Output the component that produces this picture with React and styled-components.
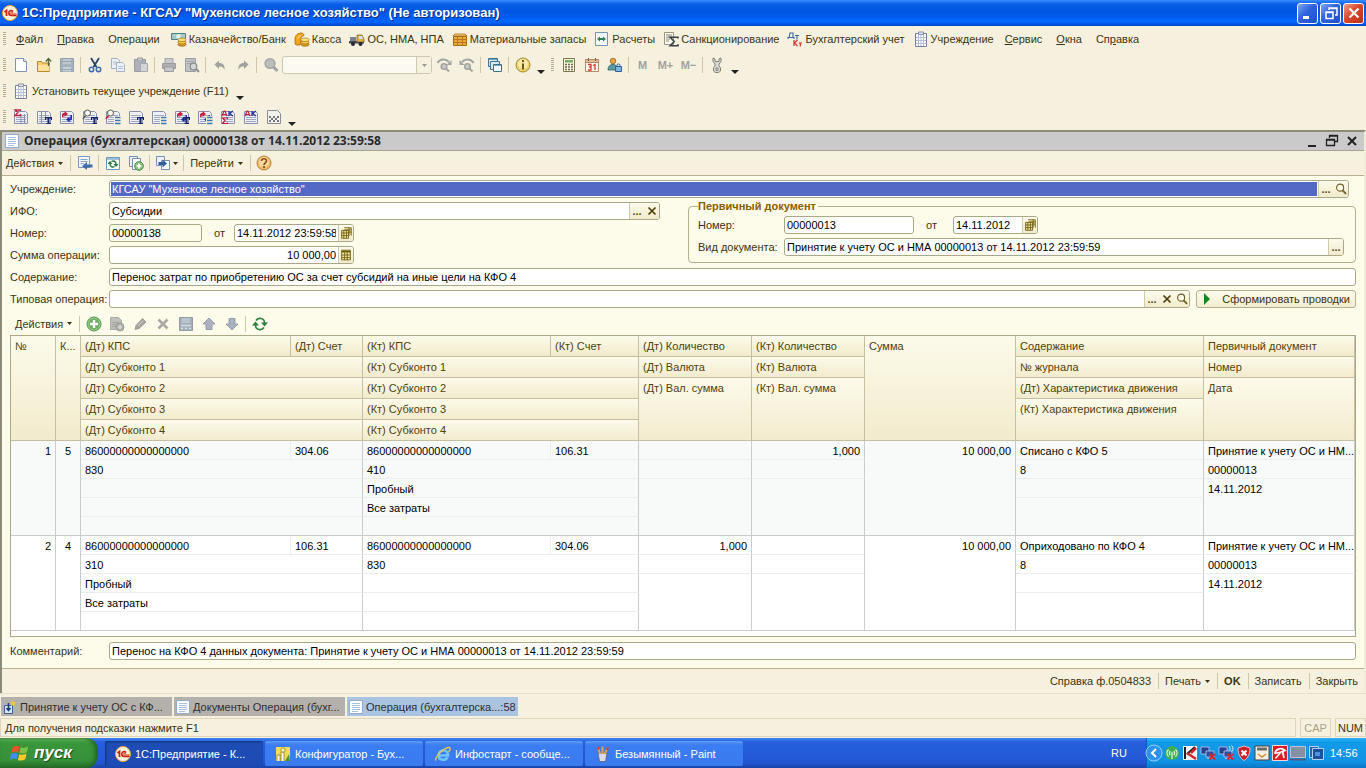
import styled, { createGlobalStyle } from "styled-components";

const page = (
  <>
    <path d="M2.5 1.5h8l3 3v10h-11z" fill="#fff" stroke="#7d93b5" />
    <path d="M10.5 1.5v3h3" fill="#dfe8f5" stroke="#7d93b5" />
  </>
);

const sheet = (
  <>
    <path d="M1.5 2.5h11l2 2v10h-13z" fill="#eef0f8" stroke="#8a8fae" />
    <path d="M3 8.5h10M3 10.5h10M3 12.5h10M3 6.5h10" stroke="#a3a7bf" />
  </>
);

const letterT = (
  <path d="M9 8h7v3h-1V9.500h-1.500V14H15v1h-4.500v-1h1V9.500H10V11H9z" fill="#16246e" />
);

const blueLines = (
  <>
    <path d="M9 7h7v9H9z" fill="#f6f0dd" />
    <path d="M10 8.500h5.500M10 11.500h5.500M10 14.500h5.500" stroke="#3b78b8" strokeWidth="1.500" />
  </>
);

const redBlueArrows = (
  <>
    <path d="M3 8V6c0-1.500 1-2 2.500-2V2L9 5 5.500 8V6C4.500 6 4.500 6.500 4.500 8z" fill="#c2203c" />
    <path d="M13 6v3.500c0 1.500-1 2-2.500 2v2l-3.500-3 3.500-3v2c1 0 1 0 1-3.500z" fill="#1d2cb0" />
  </>
);

const coins = (
  <>
    <ellipse cx="11" cy="13.500" rx="4.200" ry="1.800" fill="#d79a1d" stroke="#946410" strokeWidth=".6" />
    <ellipse cx="11" cy="11.200" rx="4.200" ry="1.800" fill="#f4c742" stroke="#946410" strokeWidth=".6" />
    <ellipse cx="11" cy="8.800" rx="4.200" ry="1.800" fill="#ffe27a" stroke="#946410" strokeWidth=".6" />
  </>
);

const clipboard = (
  <>
    <path d="M2.500 2.500h11v13h-11z" fill="#fff" stroke="#74809a" />
    <path d="M5.500 1h5v2.500h-5z" fill="#dfe3ec" stroke="#74809a" strokeWidth=".8" />
    <path d="M3 6.500h10M3 9.500h10M3 12.500h10M5.500 4v11M8 4v11M10.500 4v11" stroke="#b5bfd3" />
  </>
);

const monitors = (
  <>
    <path d="M1 2h8v7H1z" fill="#24418f" stroke="#b9c9ee" strokeWidth=".8" />
    <path d="M6 6h8v6H6z" fill="#30509f" stroke="#b9c9ee" strokeWidth=".8" />
    <path d="M7 13.500h6" stroke="#aab8dd" />
  </>
);

const redCross = (
  <path d="M9.500 9l5.500 5.500M15 9l-5.500 5.500" stroke="#d8262b" strokeWidth="2" />
);

const icons = {
  logo: (
    <>
      <circle cx="8" cy="8" r="7.500" fill="#fdf3dd" stroke="#e9a63b" />
      <path d="M2.500 7l2-1.500V11" fill="none" stroke="#cf2016" strokeWidth="1.800" />
      <path d="M11 6.500C9.500 4.800 6.800 5.800 6.800 8c0 1.500 1 2.500 2.700 2.500h5" fill="none" stroke="#cf2016" strokeWidth="1.600" />
      <path d="M10.800 7.600c-1-.9-2.200-.4-2.200.6 0 .5.400.8 1 .8h5" fill="none" stroke="#cf2016" />
    </>
  ),
  bank: (
    <>
      <path d="M.5 2.500h14v6H.5z" fill="#a5c9c4" stroke="#4f8082" />
      <path d="M5.500 3.500h4v4h-4z" fill="#e6f3ee" />
      {coins}
    </>
  ),
  cash: (
    <>
      <path d="M1 13V8c0-4 3-6 6-6 2 0 3 1 3 2.500L7 6v3l-1 5H2z" fill="#f2a31e" stroke="#b46a0d" strokeWidth=".8" />
      <path d="M4 8c0-2 1-3 3-3.500" stroke="#ffe9a5" fill="none" />
      {coins}
    </>
  ),
  truck: (
    <>
      <path d="M1 6h6v5H1z" fill="#7e828c" />
      <path d="M0 10h15v2.500H0z" fill="#454852" />
      <path d="M8 4h5l2 4v3H8z" fill="#e0b03e" stroke="#6f5a24" strokeWidth=".7" />
      <path d="M10 5h3l1 3h-4z" fill="#cfe3f2" />
      <circle cx="4" cy="13" r="2" fill="#26272c" />
      <circle cx="11.500" cy="13" r="2" fill="#26272c" />
    </>
  ),
  box: (
    <>
      <path d="M1 5l2-2h10l2 2z" fill="#f7d37a" stroke="#a46b1a" strokeWidth=".8" />
      <path d="M1.500 5.500h13v9h-13z" fill="#eda93a" stroke="#a46b1a" />
      <path d="M2 8.500h12M2 11.500h12M5.500 5v9.500M10.500 5v9.500" stroke="#b9781f" />
    </>
  ),
  settle: (
    <>
      <path d="M1.500 1.500h12v13h-12z" fill="#f3f8fd" stroke="#6f93bd" />
      <path d="M3 8l3-2.500v1.500h3V5.500L12 8l-3 2.500V9H6v1.500z" fill="#2f7d56" />
    </>
  ),
  sigma: (
    <>
      <path d="M1.500 1.500h9v12h-9z" fill="#fbfaf0" stroke="#9a957d" />
      <path d="M3 4h6M3 6h6M3 8h4M3 10h3" stroke="#8f8b77" />
      <path d="M15 7.500V6.200H7.200l4 4.300-4 4.300H15v-1.500" fill="none" stroke="#39434b" strokeWidth="1.600" />
    </>
  ),
  debit: (
    <>
      <path d="M1 8V6.500h1L3 2h3v4.500h1V8M2.500 6.500h3M8 4.500h4M10 4.500v4" fill="none" stroke="#38679b" strokeWidth="1.100" />
      <path d="M7 9v6M10.500 9L7.500 12l3 3M11.500 12H15M13.300 12v3.500" fill="none" stroke="#cb3434" strokeWidth="1.200" />
    </>
  ),
  clipboard,
  newDoc: page,
  open: (
    <>
      <path d="M1.500 4.500h4l1 1.500h7v8.500h-12z" fill="#f5cf6c" stroke="#b98a2c" />
      <path d="M2 8h11.500v6H2z" fill="#fbe29a" />
      <path d="M12.500 9V2M9.800 4.500l2.700-3 2.700 3" fill="none" stroke="#4c6b35" strokeWidth="1.300" />
    </>
  ),
  save: (
    <>
      <path d="M1.500 1.500h13v13h-13z" fill="#a6b3be" stroke="#93a1ae" />
      <path d="M4 2h8v5H4z" fill="#bdc8d1" />
      <path d="M4 10h8v4.500H4z" fill="#c6d0d9" />
      <path d="M3 4.500h10M3 12.500h10" stroke="#97a5b1" />
    </>
  ),
  cut: (
    <>
      <path d="M4 1l5.500 9M12 1L6.500 10" stroke="#2d4463" strokeWidth="1.800" />
      <circle cx="4.500" cy="12.500" r="2.200" fill="none" stroke="#3e6aa8" strokeWidth="1.500" />
      <circle cx="11.500" cy="12.500" r="2.200" fill="none" stroke="#3e6aa8" strokeWidth="1.500" />
    </>
  ),
  copy: (
    <>
      <path d="M1.500 1.500h6l2 2v8h-8z" fill="#eef1f5" stroke="#a2b2c8" />
      <path d="M6.500 5.500h6l2 2v7h-8z" fill="#eef1f5" stroke="#a2b2c8" />
      <path d="M3 5h4M3 7h3M8 9.500h5M8 11.500h5" stroke="#b4c1d3" />
    </>
  ),
  paste: (
    <>
      <path d="M1.500 2.500h11v12h-11z" fill="#aeb2b8" stroke="#989ca2" />
      <path d="M4.500 1h5v3h-5z" fill="#c6c8cb" stroke="#989ca2" />
      <path d="M7.500 6.500h7v8h-7z" fill="#d3d5d7" stroke="#a6a9ae" />
    </>
  ),
  print: (
    <>
      <path d="M4 1.500h8v5H4z" fill="#c8c9cb" stroke="#a2a4a7" />
      <path d="M1.500 6.500h13v5h-13z" fill="#adafb1" stroke="#999b9e" />
      <path d="M3.500 10h9v4.500h-9z" fill="#c5c7c9" stroke="#999b9e" />
    </>
  ),
  preview: (
    <>
      <path d="M1.500 1.500h10v13h-10z" fill="#bfc1c3" stroke="#9da0a3" />
      <path d="M3 4.500h7M3 6.500h4" stroke="#a5a8ab" />
      <circle cx="9.500" cy="9.500" r="3.300" fill="#d5d6d6" stroke="#8b8e92" strokeWidth="1.300" />
      <path d="M12 12l3 3" stroke="#8b8e92" strokeWidth="2" />
    </>
  ),
  undo: <path d="M2.500 7.500l4.500-4v2.500c4 0 6 2 5.500 7-1-3-2.500-3.500-5.500-3.500v2.500z" fill="#a0a29f" />,
  redo: <path d="M13.500 7.500L9 3.500v2.500c-4 0-6 2-5.500 7 1-3 2.500-3.500 5.500-3.500v2.500z" fill="#a0a29f" />,
  find: (
    <>
      <circle cx="7" cy="6.500" r="4.800" fill="#bcbebd" stroke="#a5a7a5" strokeWidth="1.600" />
      <path d="M10.500 10l4 4" stroke="#a0a2a1" strokeWidth="3" />
    </>
  ),
  findNext: (
    <>
      <circle cx="8" cy="9.500" r="2.800" fill="#c9cac6" stroke="#a3a5a3" strokeWidth="1.600" />
      <path d="M10 11.500l3 3" stroke="#a3a5a3" strokeWidth="2" />
      <path d="M1.500 6C4 1.500 10 1.500 13 5" fill="none" stroke="#a3a5a3" strokeWidth="2" />
      <path d="M15.500 3v5h-5z" fill="#a3a5a3" />
    </>
  ),
  findPrev: (
    <>
      <circle cx="8.500" cy="9.500" r="2.800" fill="#c9cac6" stroke="#a3a5a3" strokeWidth="1.600" />
      <path d="M10.500 11.500l3 3" stroke="#a3a5a3" strokeWidth="2" />
      <path d="M14.500 6C12 1.500 6 1.500 3 5" fill="none" stroke="#a3a5a3" strokeWidth="2" />
      <path d="M.5 3v5h5z" fill="#a3a5a3" />
    </>
  ),
  windows: (
    <>
      <path d="M1.500 1.500h9v8h-9z" fill="#d9eaf2" stroke="#41708c" />
      <path d="M3.500 4.500h9v8h-9z" fill="#d9eaf2" stroke="#41708c" />
      <path d="M6.500 7.500h8v7h-8z" fill="#f8fcff" stroke="#41708c" />
      <path d="M2 2.500h8M7 8.500h7" stroke="#6fa3c0" />
    </>
  ),
  info: (
    <>
      <circle cx="8" cy="8" r="7" fill="#ecd36e" stroke="#a58a34" />
      <circle cx="8" cy="7" r="5" fill="#f8e9a6" />
      <path d="M8 3v2M8 6.500v6" stroke="#6b5718" strokeWidth="2" />
    </>
  ),
  calc: (
    <>
      <path d="M2.500 1.500h11v13h-11z" fill="#faf7e2" stroke="#7d7748" />
      <path d="M4 3h8v2.500H4z" fill="#79a95c" />
      <path d="M4 7.500h8M4 10h8M4 12.500h8" stroke="#6d6a4d" strokeWidth="1.500" strokeDasharray="2 1" />
    </>
  ),
  calendar: (
    <>
      <path d="M1.500 2.500h13v12h-13z" fill="#fdf7ef" stroke="#b48a6a" />
      <path d="M1.500 2.500h13v3h-13z" fill="#e5b898" stroke="#b48a6a" />
      <path d="M4.500 1v3M11.500 1v3" stroke="#865f45" />
      <path d="M4 7.500h3v5.500H4M5 10h2M9 8.500l2-1V13" fill="none" stroke="#d13c2c" strokeWidth="1.300" />
    </>
  ),
  users: (
    <>
      <circle cx="6" cy="4" r="2.800" fill="#e7a43f" stroke="#8f6523" strokeWidth=".8" />
      <path d="M1 13c0-4 2-5.500 5-5.500S10 9 10 13z" fill="#5d9a9e" stroke="#2f6266" strokeWidth=".8" />
      <path d="M8.500 9.500h6v5h-6z" fill="#7fb4de" stroke="#2f5f8f" />
      <path d="M10 9.500V8c0-1.500 3-1.500 3 0v1.500" fill="none" stroke="#2f5f8f" />
    </>
  ),
  wrench: (
    <path
      d="M4 1v3.500l2 2.500v2L4.500 11v3l2 1.500h3l2-1.500v-3L10 9V7l2-2.500V1L10 2v2.500H6V2zM7 11h2v2.500H7z"
      fill="#dadad4"
      stroke="#77776f"
      strokeWidth=".9"
    />
  ),
  repSum: (
    <>
      {sheet}
      <path d="M8 5v9M11.500 5v9" stroke="#8a8fae" />
      <path d="M7.500 2V1H2l3 2.500L2 6.500h5.500V5" fill="none" stroke="#c22646" strokeWidth="1.300" />
    </>
  ),
  repT: (
    <>
      {sheet}
      <path d="M5.500 3v11M9.500 3v5" stroke="#8a8fae" />
      {letterT}
    </>
  ),
  repArrows: (
    <>
      {sheet}
      {redBlueArrows}
    </>
  ),
  repFindT: (
    <>
      {sheet}
      <circle cx="5.500" cy="4" r="3" fill="#fafaf2" stroke="#5c5c50" />
      <path d="M3.500 6.500L1 10" stroke="#5c5c50" strokeWidth="1.500" />
      {letterT}
    </>
  ),
  repFindLines: (
    <>
      {sheet}
      <circle cx="5.500" cy="4" r="3" fill="#fafaf2" stroke="#5c5c50" />
      <path d="M3.500 6.500L1 10" stroke="#c2203c" strokeWidth="1.500" />
      {blueLines}
    </>
  ),
  repSheetT: (
    <>
      {sheet}
      {letterT}
    </>
  ),
  repSheetLines: (
    <>
      {sheet}
      {blueLines}
    </>
  ),
  repArrowsT: (
    <>
      {sheet}
      {redBlueArrows}
      {letterT}
    </>
  ),
  repArrowsLines: (
    <>
      {sheet}
      {redBlueArrows}
      {blueLines}
    </>
  ),
  repAkSum: (
    <>
      {sheet}
      <path d="M2 7l2-5h1l2 5M3 5.500h3" fill="none" stroke="#c2203c" strokeWidth="1.200" />
      <path d="M9 2v5M13 2L9.500 4.500 13 7" fill="none" stroke="#2330a0" strokeWidth="1.300" />
      <path d="M7.500 10V9H2.500l2.500 2.500L2.500 14.500h5v-1" fill="none" stroke="#c2203c" strokeWidth="1.200" />
    </>
  ),
  repAk: (
    <>
      {sheet}
      <path d="M2 7l2-5h1l2 5M3 5.500h3" fill="none" stroke="#c2203c" strokeWidth="1.200" />
      <path d="M9 2v5M13 2L9.500 4.500 13 7" fill="none" stroke="#2330a0" strokeWidth="1.300" />
    </>
  ),
  repCheck: (
    <>
      <path d="M1.500 1.500h10l3 3v10h-13z" fill="#f2f2ec" stroke="#8b8d92" />
      <path d="M3 8h10M3 12h10" stroke="#77797e" strokeWidth="2" strokeDasharray="2 2" />
      <path d="M5 10h8" stroke="#77797e" strokeWidth="2" strokeDasharray="2 2" />
    </>
  ),
  doc: (
    <>
      <path d="M1.500 1.500h13v13h-13z" fill="#fff" stroke="#93a9cc" />
      <path d="M4 4.500h8M4 6.500h8M4 8.500h8M4 10.500h8M4 12.500h6" stroke="#a9bfe0" />
    </>
  ),
  docNew: (
    <>
      <path d="M2.500 6.500h8v8h-8z" fill="#dce6f5" stroke="#3a5b93" />
      <path d="M6.500 4v6.500M4.500 9l2 2.500 2-2.500" stroke="#1f3c74" strokeWidth="1.500" fill="none" />
      <path d="M11 1l1 2.200 2.500.3-2 1.600.5 2.400-2-1.500-2 1.500.5-2.400-2-1.600L10 3.200z" fill="#f7c33c" />
    </>
  ),
  toList: (
    <>
      <path d="M1.500 1.500h11v11h-11z" fill="#f4f7fb" stroke="#7c97bf" />
      <path d="M3.500 4.500h7M3.500 6.500h7M3.500 8.500h3" stroke="#8ba3c7" />
      <path d="M5 11l5-4v2.500h5.500v3H10V15z" fill="#3d6ea9" />
    </>
  ),
  refreshBox: (
    <>
      <path d="M1.500 2.500h13v12h-13z" fill="#f4faf6" stroke="#6d99b6" />
      <path d="M2 3h12v2H2z" fill="#9fc1d8" />
      <path d="M2.500 9h5L5 6zM8.500 9h5L11 12z" fill="#2a7542" />
      <path d="M5 9c0 3 3 3.500 4.500 2.500M11 9c0-3-3-3.500-4.500-2.500" fill="none" stroke="#2a7542" strokeWidth="1.400" />
    </>
  ),
  addCopy: (
    <>
      <path d="M1.500 1.500h8v10h-8z" fill="#eef3fa" stroke="#7790b3" />
      <path d="M4.500 3.500h8v11h-8z" fill="#fafcff" stroke="#7790b3" />
      <circle cx="11" cy="11" r="4.300" fill="#8cc37e" stroke="#4e8d49" />
      <path d="M11 8.500v5M8.500 11h5" stroke="#fff" strokeWidth="1.700" />
    </>
  ),
  basedOn: (
    <>
      <path d="M1.500 1.500h8v9h-8z" fill="#eef3fa" stroke="#7790b3" />
      <path d="M6.500 5.500h8v9h-8z" fill="#fafcff" stroke="#7790b3" />
      <path d="M3.500 7h4V4.500l4.500 4L7.500 12.500V10h-4z" fill="#2f5f96" />
    </>
  ),
  help: (
    <>
      <circle cx="8" cy="8" r="7" fill="#f1bb6d" stroke="#b7803b" />
      <circle cx="8" cy="7" r="5" fill="#fadba4" />
      <path d="M5.500 6c0-3 5-3 5 0 0 2-2.500 1.800-2.500 4M8 11v2" fill="none" stroke="#8a4f16" strokeWidth="1.700" />
    </>
  ),
  add: (
    <>
      <circle cx="8" cy="8" r="7" fill="#8fc684" stroke="#5c9257" />
      <circle cx="8" cy="8" r="5.200" fill="#6cad63" />
      <path d="M8 4v8M4 8h8" stroke="#fff" strokeWidth="2.400" />
    </>
  ),
  addCopyOff: (
    <>
      <path d="M1.500 1.500h8l3 3v9h-11z" fill="#bfc0bb" stroke="#a9aaa6" />
      <path d="M3 6.500h7M3 8.500h5M3 10.500h4" stroke="#a4a5a1" />
      <circle cx="11" cy="11" r="4" fill="#b0b1ad" stroke="#9b9c98" />
      <path d="M11 9v4M9 11h4" stroke="#d8d8d3" strokeWidth="1.500" />
    </>
  ),
  edit: (
    <>
      <path d="M3 13.500l1-4 6.500-7 3.500 3.500-7 6.500z" fill="#a4a5a0" stroke="#8f908c" strokeWidth=".8" />
      <path d="M6 10l5-5.500" stroke="#d0d0ca" />
    </>
  ),
  remove: <path d="M3.500 3.500l9 9M12.500 3.500l-9 9" stroke="#aaaaa5" strokeWidth="2.800" />,
  finish: (
    <>
      <path d="M1.500 1.500h13v13h-13z" fill="#a5afb9" stroke="#929da8" />
      <path d="M4 2h8v5H4z" fill="#bcc5cd" />
      <path d="M3 9.500h10M3 12.500h2M7 12.500h2M11 12.500h2" stroke="#d7dce0" strokeWidth="1.500" />
    </>
  ),
  up: <path d="M8 2l6 6h-3v5.500H5V8H2z" fill="#aab2c1" stroke="#959dad" />,
  down: <path d="M8 14L2 8h3V2.500h6V8h3z" fill="#aab2c1" stroke="#959dad" />,
  refresh: (
    <>
      <path d="M3.500 9c0 5 6 6 8.500 2.500M12.500 7c0-5-6-6-8.500-2.500" fill="none" stroke="#2f8142" strokeWidth="1.600" />
      <path d="M0 9.500h7L3.500 5.500zM16 6.500H9l3.500 4z" fill="#2f8142" />
    </>
  ),
  dates: (
    <>
      <path d="M3 5h8v9H3zM6 2h8v9" fill="#f5e79c" stroke="#6d5d12" />
      <path d="M3 8h8M3 11h8M5.500 5v9M8.500 5v9M6 4.500h8M11 7h3M11.500 2v9" stroke="#6d5d12" />
    </>
  ),
  sum: (
    <>
      <path d="M3 2.500h10v11H3z" fill="#f5e79c" stroke="#6d5d12" />
      <path d="M3 4h10" stroke="#6d5d12" strokeWidth="2" />
      <path d="M3 8h10M3 11h10M6.500 5v9M9.500 5v9" stroke="#6d5d12" />
    </>
  ),
  clear: <path d="M4 4l8 8M12 4l-8 8" stroke="#4d3f0c" strokeWidth="2" />,
  lens: (
    <>
      <circle cx="7" cy="6.500" r="4" fill="#fdfbe9" stroke="#6d5d2a" strokeWidth="1.300" />
      <path d="M9.800 9.500l4 4" stroke="#6d5d2a" strokeWidth="2" />
    </>
  ),
  play: <path d="M5 2l6 6-6 6z" fill="#0c8a1c" />,
  config: (
    <>
      <path d="M1 1h14v14H1z" fill="#f3dc55" />
      <path d="M2 15V9h3v6M6 15V6h3v9" fill="#fff" stroke="#8e7c1c" strokeWidth=".8" />
      <circle cx="8" cy="4" r="2.200" fill="#fff8c6" stroke="#8e7c1c" strokeWidth=".8" />
      <path d="M10 15l4-7 1 7z" fill="#5a8f3a" />
    </>
  ),
  explorer: (
    <>
      <path d="M3.500 9.500h9.500c0-7-9.500-7-9.500 0 0 5 7 5.500 9 1.800" fill="none" stroke="#6fc6f7" strokeWidth="2.600" />
      <path d="M1 14.500C-1 12 9 1 14.500 1.500c1.500 1 .5 3-1 4.500" fill="none" stroke="#f0c74a" strokeWidth="1.300" />
    </>
  ),
  paint: (
    <>
      <path d="M3 7h9l-1.500 8.500h-6z" fill="#d9dbe8" stroke="#585c7c" strokeWidth=".8" />
      <path d="M5 8L3 1M7.500 8V.5M9.500 8L13 1.500" stroke="#e0a34c" strokeWidth="2" />
      <path d="M3 1l.8 2.500M13 1.500L12 4" stroke="#cf3627" strokeWidth="2" />
    </>
  ),
  flag: (
    <>
      <path d="M2 3.500C4 2 6 2.200 7.600 3L6.600 7.500C5 6.700 3 6.700 1 8z" fill="#ee5328" />
      <path d="M8.600 3.400c2 .9 4 .7 6-.6l-1.100 4.500c-2 1.200-4 1.400-5.900.5z" fill="#7fc242" />
      <path d="M.8 9C2.800 7.700 4.800 7.700 6.400 8.500L5.300 13c-1.600-.8-3.600-.8-5.500.5z" fill="#3f8df5" />
      <path d="M7.400 8.900c1.900.9 3.900.7 5.900-.5L12.200 13c-2 1.200-4 1.400-5.900.5z" fill="#fcc82c" />
    </>
  ),
  trayArrow: (
    <>
      <circle cx="8" cy="8" r="8" fill="#2f93ea" stroke="#8fd0fb" />
      <path d="M10 4L6 8l4 4" fill="none" stroke="#fff" strokeWidth="2" />
    </>
  ),
  trayAntenna: (
    <>
      <circle cx="8" cy="8" r="7" fill="#3fae55" />
      <path d="M4.500 4.500c-2 2-2 5 0 7M11.500 4.500c2 2 2 5 0 7M8 7v7M6.200 6c-1 1.200-1 2.800 0 4M9.800 6c1 1.200 1 2.800 0 4" fill="none" stroke="#dff7df" strokeWidth="1.200" />
    </>
  ),
  trayK: (
    <>
      <path d="M1 1h14v14H1z" fill="#f4f4f4" />
      <path d="M3 2v12M13 2L5 9" stroke="#222" strokeWidth="2" />
      <path d="M5 8l9 6M14 3l-5 5" stroke="#d2232a" strokeWidth="2.500" />
    </>
  ),
  trayNetOff: (
    <>
      {monitors}
      {redCross}
    </>
  ),
  trayWifiOff: (
    <>
      {monitors}
      <path d="M11 1c1.500 1.500 1.500 3 0 4.500M13.500.5c2 2 2 4.500 0 6" fill="none" stroke="#e3edfb" />
      {redCross}
    </>
  ),
  trayShield: (
    <>
      <path d="M8 1l6 2c0 6-2 10-6 12.500C4 13 2 9 2 3z" fill="#cc1f27" stroke="#f0c8c8" strokeWidth=".9" />
      <path d="M5.500 5.500l5 5M10.500 5.500l-5 5" stroke="#fff" strokeWidth="2" />
    </>
  ),
  trayPunto: (
    <>
      <path d="M1 1h14v14H1z" fill="#f5efe2" stroke="#444" />
      <path d="M3 2.500h10v3H3z" fill="#6b6b6b" />
      <path d="M4 9l4 3 4-3" fill="none" stroke="#d39032" strokeWidth="1.500" />
    </>
  ),
  trayUmbrella: (
    <>
      <path d="M.5.5h15v15H.5z" fill="#d81f26" stroke="#f6d5d5" />
      <path d="M3 9c0-5 6-7 10-3.500l-2.500 1L12 13" fill="none" stroke="#fff" strokeWidth="1.800" />
      <path d="M3 8.500l6-1.500L3.500 13.500" fill="none" stroke="#fff" strokeWidth="1.500" />
    </>
  ),
  trayScreen: (
    <>
      <path d="M.5 1.500h15v11H.5z" fill="#8590a0" stroke="#b9c4d8" />
      <path d="M0 14.500h16" stroke="#4e5f7f" strokeWidth="2" />
    </>
  ),
  trayCards: (
    <>
      <path d="M1.500 1.500h9v11h-9z" fill="#2b62b2" stroke="#b3d2f5" />
      <path d="M4.500 3.500h11v11h-11z" fill="#1b509c" stroke="#b3d2f5" />
      <path d="M7 7h5v4H7z" fill="#4f93dd" />
    </>
  ),
};

const Icon = ({ name, size = 16 }) => (
  <Svg viewBox="0 0 16 16" $size={size} aria-hidden="true">
    {icons[name]}
  </Svg>
);

const Caret = () => (
  <CaretSvg viewBox="0 0 5 3" aria-hidden="true">
    <path d="M0 0h5L2.500 3z" fill="currentColor" />
  </CaretSvg>
);

const menu = [
  { text: "Файл", key: 0 },
  { text: "Правка", key: 0 },
  { text: "Операции" },
  { text: "Казначейство/Банк", icon: "bank" },
  { text: "Касса", icon: "cash" },
  { text: "ОС, НМА, НПА", icon: "truck" },
  { text: "Материальные запасы", icon: "box" },
  { text: "Расчеты", icon: "settle" },
  { text: "Санкционирование", icon: "sigma" },
  { text: "Бухгалтерский учет", icon: "debit" },
  { text: "Учреждение", icon: "clipboard" },
  { text: "Сервис", key: 0 },
  { text: "Окна", key: 0 },
  { text: "Справка", key: 2 },
];

const reports = [
  "repSum",
  "repT",
  "repArrows",
  "repFindT",
  "repFindLines",
  "repSheetT",
  "repSheetLines",
  "repArrowsT",
  "repArrowsLines",
  "repAkSum",
  "repAk",
  "repCheck",
];

const entries = [
  {
    n: 1,
    kfo: 5,
    dt: ["86000000000000000", "304.06", "830", "", "", ""],
    kt: ["86000000000000000", "106.31", "410", "Пробный", "Все затраты", ""],
    dtCount: "",
    ktCount: "1,000",
    sum: "10 000,00",
    text: "Списано с КФО 5",
  },
  {
    n: 2,
    kfo: 4,
    dt: ["86000000000000000", "106.31", "310", "Пробный", "Все затраты", ""],
    kt: ["86000000000000000", "304.06", "830", "", "", ""],
    dtCount: "1,000",
    ktCount: "",
    sum: "10 000,00",
    text: "Оприходовано по КФО 4",
  },
];

const columns = [45, 25, 210, 72, 188, 88, 113, 113, 151, 188, 151];

const tray = [
  "trayArrow",
  "trayAntenna",
  "trayK",
  "trayNetOff",
  "trayWifiOff",
  "trayShield",
  "trayPunto",
  "trayUmbrella",
  "trayScreen",
  "trayCards",
];

const MenuText = ({ text, hotkey }) =>
  hotkey === undefined ? (
    <span>{text}</span>
  ) : (
    <span>
      {text.slice(0, hotkey)}
      <u>{text[hotkey]}</u>
      {text.slice(hotkey + 1)}
    </span>
  );

const Tools = ({ names }) =>
  names.map((name) => (
    <Tool key={name} aria-label={name}>
      <Icon name={name} />
    </Tool>
  ));

const Entry = ({ row }) => (
  <tbody>
    <Line>
      <Td rowSpan={5} $end $right>{row.n}</Td>
      <Td rowSpan={5} $end $center>{row.kfo}</Td>
      <Td $soft>{row.dt[0]}</Td>
      <Td>{row.dt[1]}</Td>
      <Td $soft>{row.kt[0]}</Td>
      <Td>{row.kt[1]}</Td>
      <Td $right>{row.dtCount}</Td>
      <Td $right>{row.ktCount}</Td>
      <Td rowSpan={5} $end $right>{row.sum}</Td>
      <Td>{row.text}</Td>
      <Td>Принятие к учету ОС и НМ...</Td>
    </Line>
    <Line>
      <Td colSpan={2}>{row.dt[2]}</Td>
      <Td colSpan={2}>{row.kt[2]}</Td>
      <Td />
      <Td />
      <Td>8</Td>
      <Td>00000013</Td>
    </Line>
    <Line>
      <Td colSpan={2}>{row.dt[3]}</Td>
      <Td colSpan={2}>{row.kt[3]}</Td>
      <Td rowSpan={3} $end />
      <Td rowSpan={3} $end />
      <Td />
      <Td rowSpan={3} $end>14.11.2012</Td>
    </Line>
    <Line>
      <Td colSpan={2}>{row.dt[4]}</Td>
      <Td colSpan={2}>{row.kt[4]}</Td>
      <Td rowSpan={2} $end />
    </Line>
    <Line>
      <Td colSpan={2} $end>{row.dt[5]}</Td>
      <Td colSpan={2} $end>{row.kt[5]}</Td>
    </Line>
  </tbody>
);

const App = () => {
  return (
    <Page>
      <GlobalStyle />
      <TitleBar>
        <Icon name="logo" />
        <Title>1С:Предприятие - КГСАУ "Мухенское лесное хозяйство" (Не авторизован)</Title>
        <WinButton aria-label="Свернуть">
          <Svg viewBox="0 0 16 16" $size={16}>
            <path d="M3 11h6v3H3z" fill="#fff" />
          </Svg>
        </WinButton>
        <WinButton aria-label="Восстановить">
          <Svg viewBox="0 0 16 16" $size={16}>
            <path d="M6 5V3h8v7h-2M6 3.500h8" fill="none" stroke="#fff" strokeWidth="1.500" />
            <path d="M3 7h7v6.500H3zM3 7.500h7" fill="none" stroke="#fff" strokeWidth="1.500" />
          </Svg>
        </WinButton>
        <WinButton $close aria-label="Закрыть">
          <Svg viewBox="0 0 16 16" $size={16}>
            <path d="M3.500 3.500l9 9M12.500 3.500l-9 9" stroke="#fff" strokeWidth="2.200" />
          </Svg>
        </WinButton>
      </TitleBar>

      <Bar>
        <Handle />
        <Menu>
          {menu.map((item) => (
            <MenuItem key={item.text} $icon={item.icon}>
              {item.icon && <Icon name={item.icon} />}
              <MenuText text={item.text} hotkey={item.key} />
            </MenuItem>
          ))}
        </Menu>
      </Bar>

      <Bar>
        <Handle />
        <Tools names={["newDoc", "open", "save"]} />
        <Sep />
        <Tools names={["cut", "copy", "paste"]} />
        <Sep />
        <Tools names={["print", "preview"]} />
        <Sep />
        <Tools names={["undo", "redo"]} />
        <Sep />
        <Tools names={["find"]} />
        <SearchBox>
          <SearchInput aria-label="Поиск" />
          <SearchDrop aria-label="История поиска">
            <Caret />
          </SearchDrop>
        </SearchBox>
        <Tools names={["findNext", "findPrev"]} />
        <Sep />
        <Tools names={["windows"]} />
        <Sep />
        <Tools names={["info"]} />
        <More aria-label="Ещё">
          <BigCaret />
        </More>
        <Handle />
        <Tools names={["calc", "calendar", "users"]} />
        <Sep />
        <Memory>M</Memory>
        <Memory>M+</Memory>
        <Memory>M−</Memory>
        <Sep />
        <Tools names={["wrench"]} />
        <More aria-label="Ещё">
          <BigCaret />
        </More>
      </Bar>

      <Bar>
        <Handle />
        <Tools names={["clipboard"]} />
        <TextTool $tight>Установить текущее учреждение (F11)</TextTool>
        <More aria-label="Ещё">
          <BigCaret />
        </More>
      </Bar>

      <Bar>
        <Handle />
        <Tools names={reports} />
        <More aria-label="Ещё">
          <BigCaret />
        </More>
      </Bar>

      <Window>
        <WindowTitle>
          <Icon name="doc" />
          <WindowName>Операция (бухгалтерская) 00000138 от 14.11.2012 23:59:58</WindowName>
          <ChildButton aria-label="Свернуть окно">
            <Svg viewBox="0 0 16 16" $size={16}>
              <path d="M4 13h8" stroke="#222" strokeWidth="2" />
            </Svg>
          </ChildButton>
          <ChildButton aria-label="Восстановить окно">
            <Svg viewBox="0 0 16 16" $size={16}>
              <path d="M5.500 5V2.500h8v6H11M5.500 3h8" fill="none" stroke="#222" strokeWidth="1.300" />
              <path d="M2.500 6.500h8v6h-8zM2.500 7h8" fill="none" stroke="#222" strokeWidth="1.300" />
            </Svg>
          </ChildButton>
          <ChildButton aria-label="Закрыть окно">
            <Svg viewBox="0 0 16 16" $size={16}>
              <path d="M4 4l8 8M12 4l-8 8" stroke="#222" strokeWidth="2" />
            </Svg>
          </ChildButton>
        </WindowTitle>

        <CommandBar>
          <TextTool>
            Действия <Caret />
          </TextTool>
          <Sep />
          <Tools names={["toList"]} />
          <Sep />
          <Tools names={["refreshBox", "addCopy"]} />
          <Sep />
          <DropTool aria-label="На основании">
            <Icon name="basedOn" />
            <Caret />
          </DropTool>
          <Sep />
          <TextTool>
            Перейти <Caret />
          </TextTool>
          <Sep />
          <Tools names={["help"]} />
        </CommandBar>

        <Form>
          <Row $inset>
            <Label htmlFor="org">Учреждение:</Label>
            <Field>
              <Input id="org" defaultValue={'КГСАУ "Мухенское лесное хозяйство"'} $selected />
              <FieldButton aria-label="Выбрать учреждение">...</FieldButton>
              <FieldButton aria-label="Открыть учреждение"><Icon name="lens" size={14} /></FieldButton>
            </Field>
          </Row>

          <Columns>
            <Stack>
              <Row>
                <Label htmlFor="ifo">ИФО:</Label>
                <Field>
                  <Input id="ifo" defaultValue="Субсидии" />
                  <FieldButton aria-label="Выбрать ИФО">...</FieldButton>
                  <FieldButton aria-label="Очистить ИФО"><Icon name="clear" size={14} /></FieldButton>
                </Field>
              </Row>
              <Row>
                <Label htmlFor="number">Номер:</Label>
                <Field $width={93} $tinted>
                  <Input id="number" defaultValue="00000138" />
                </Field>
                <From htmlFor="date">от</From>
                <Field $width={120}>
                  <Input id="date" defaultValue="14.11.2012 23:59:58" />
                  <FieldButton aria-label="Выбрать дату"><Icon name="dates" size={14} /></FieldButton>
                </Field>
              </Row>
              <Row>
                <Label htmlFor="total">Сумма операции:</Label>
                <Field $width={245}>
                  <Input id="total" defaultValue="10 000,00" $right />
                  <FieldButton aria-label="Калькулятор"><Icon name="sum" size={14} /></FieldButton>
                </Field>
              </Row>
            </Stack>

            <Group>
              <Legend>Первичный документ</Legend>
              <Row>
                <Label htmlFor="srcNumber" $short>Номер:</Label>
                <Field $width={130}>
                  <Input id="srcNumber" defaultValue="00000013" />
                </Field>
                <From htmlFor="srcDate" $wide>от</From>
                <Field $width={85}>
                  <Input id="srcDate" defaultValue="14.11.2012" />
                  <FieldButton aria-label="Выбрать дату документа"><Icon name="dates" size={14} /></FieldButton>
                </Field>
              </Row>
              <Row>
                <Label htmlFor="srcKind" $short>Вид документа:</Label>
                <Field>
                  <Input id="srcKind" defaultValue="Принятие к учету ОС и НМА 00000013 от 14.11.2012 23:59:59" />
                  <FieldButton aria-label="Выбрать документ">...</FieldButton>
                </Field>
              </Row>
            </Group>
          </Columns>

          <Row>
            <Label htmlFor="content">Содержание:</Label>
            <Field>
              <Input
                id="content"
                defaultValue="Перенос затрат по приобретению ОС за счет субсидий на иные цели на КФО 4"
              />
            </Field>
          </Row>
          <Row>
            <Label htmlFor="template">Типовая операция:</Label>
            <Field>
              <Input id="template" />
              <FieldButton aria-label="Выбрать операцию">...</FieldButton>
              <FieldButton aria-label="Очистить операцию"><Icon name="clear" size={14} /></FieldButton>
              <FieldButton aria-label="Открыть операцию"><Icon name="lens" size={14} /></FieldButton>
            </Field>
            <MakeButton>
              <Icon name="play" />
              Сформировать проводки
            </MakeButton>
          </Row>

          <TableBar>
            <TextTool>
              Действия <Caret />
            </TextTool>
            <Sep />
            <Tools names={["add", "addCopyOff", "edit", "remove", "finish", "up", "down"]} />
            <Sep />
            <Tools names={["refresh"]} />
          </TableBar>

          <TableFrame>
            <Table>
              <colgroup>
                {columns.map((width, i) => (
                  <col key={i} width={width} />
                ))}
              </colgroup>
              <thead>
                <HeadLine>
                  <Th rowSpan={5}>№</Th>
                  <Th rowSpan={5}>К...</Th>
                  <Th>(Дт) КПС</Th>
                  <Th>(Дт) Счет</Th>
                  <Th>(Кт) КПС</Th>
                  <Th>(Кт) Счет</Th>
                  <Th>(Дт) Количество</Th>
                  <Th>(Кт) Количество</Th>
                  <Th rowSpan={5}>Сумма</Th>
                  <Th>Содержание</Th>
                  <Th>Первичный документ</Th>
                </HeadLine>
                <HeadLine>
                  <Th colSpan={2}>(Дт) Субконто 1</Th>
                  <Th colSpan={2}>(Кт) Субконто 1</Th>
                  <Th>(Дт) Валюта</Th>
                  <Th>(Кт) Валюта</Th>
                  <Th>№ журнала</Th>
                  <Th>Номер</Th>
                </HeadLine>
                <HeadLine>
                  <Th colSpan={2}>(Дт) Субконто 2</Th>
                  <Th colSpan={2}>(Кт) Субконто 2</Th>
                  <Th rowSpan={3}>(Дт) Вал. сумма</Th>
                  <Th rowSpan={3}>(Кт) Вал. сумма</Th>
                  <Th>(Дт) Характеристика движения</Th>
                  <Th rowSpan={3}>Дата</Th>
                </HeadLine>
                <HeadLine>
                  <Th colSpan={2}>(Дт) Субконто 3</Th>
                  <Th colSpan={2}>(Кт) Субконто 3</Th>
                  <Th rowSpan={2}>(Кт) Характеристика движения</Th>
                </HeadLine>
                <HeadLine>
                  <Th colSpan={2}>(Дт) Субконто 4</Th>
                  <Th colSpan={2}>(Кт) Субконто 4</Th>
                </HeadLine>
              </thead>
              {entries.map((row) => (
                <Entry key={row.n} row={row} />
              ))}
            </Table>
          </TableFrame>

          <Row>
            <Label htmlFor="comment">Комментарий:</Label>
            <Field>
              <Input
                id="comment"
                defaultValue="Перенос на КФО 4 данных документа: Принятие к учету ОС и НМА 00000013 от 14.11.2012 23:59:59"
              />
            </Field>
          </Row>
        </Form>

        <FormActions>
          <TextTool>Справка ф.0504833</TextTool>
          <Sep />
          <TextTool>
            Печать <Caret />
          </TextTool>
          <Sep />
          <TextTool $bold>OK</TextTool>
          <Sep />
          <TextTool>Записать</TextTool>
          <Sep />
          <TextTool>Закрыть</TextTool>
        </FormActions>
      </Window>

      <WindowTabs>
        <WindowTab>
          <Icon name="docNew" />
          Принятие к учету ОС с КФ...
        </WindowTab>
        <WindowTab>
          <Icon name="doc" />
          Документы Операция (бухг...
        </WindowTab>
        <WindowTab $active>
          <Icon name="doc" />
          Операция (бухгалтерска...:58
        </WindowTab>
      </WindowTabs>

      <StatusBar>
        <Hint>Для получения подсказки нажмите F1</Hint>
        <Lock $off>CAP</Lock>
        <Lock>NUM</Lock>
      </StatusBar>

      <Taskbar>
        <Start>
          <Icon name="flag" size={20} />
          пуск
        </Start>
        <Tasks>
          <Task $active>
            <Icon name="logo" />
            1С:Предприятие - К...
          </Task>
          <Task>
            <Icon name="config" />
            Конфигуратор - Бух...
          </Task>
          <Task>
            <Icon name="explorer" />
            Инфостарт - сообще...
          </Task>
          <Task>
            <Icon name="paint" />
            Безымянный - Paint
          </Task>
        </Tasks>
        <Lang>RU</Lang>
        <Tray>
          {tray.map((name) => (
            <Icon key={name} name={name} />
          ))}
          <Clock>14:56</Clock>
        </Tray>
      </Taskbar>
    </Page>
  );
};

const GlobalStyle = createGlobalStyle`
  * {
    box-sizing: border-box;
  }

  body {
    margin: 0;
    background-color: #f6f1de;
    color: #3c3410;
    font-family: "Liberation Sans", Arial, sans-serif;
    font-size: 11px;
    line-height: 14px;
  }

  button, input {
    font: inherit;
    color: inherit;
  }

  button {
    padding: 0;
    border: none;
    background: none;
    white-space: nowrap;
  }
`;

const Page = styled.div`
  display: flex;
  flex-direction: column;
  min-height: 100vh;
`;

const Svg = styled.svg`
  flex: none;
  width: ${({ $size }) => $size}px;
  height: ${({ $size }) => $size}px;
  overflow: visible;
`;

const CaretSvg = styled.svg`
  flex: none;
  width: 5px;
  height: 3px;
`;

const TitleBar = styled.header`
  display: flex;
  align-items: center;
  gap: 2px;
  height: 26px;
  padding: 0 2px;
  background: linear-gradient(#3a8cff 0, #0a5fe8 4px, #0055e0 12px, #0366ff 22px, #0144c4 26px);
`;

const Title = styled.h1`
  flex: 1;
  margin: 0 2px;
  color: #fff;
  font-size: 13px;
  font-weight: 700;
  text-shadow: 1px 1px #0a2a80;
`;

const WinButton = styled.button`
  display: flex;
  align-items: center;
  justify-content: center;
  width: 21px;
  height: 21px;
  border: 1px solid #fff;
  border-radius: 3px;
  background: ${({ $close }) =>
    $close
      ? "linear-gradient(135deg, #f0a08a, #d9482a 45%, #b83210)"
      : "linear-gradient(135deg, #7fa6f5, #2f62dc 45%, #1c4fd0)"};
`;

const Bar = styled.div`
  display: flex;
  align-items: center;
  height: 26px;
  padding-left: 3px;
`;

const Handle = styled.span`
  width: 3px;
  height: 14px;
  margin-right: 3px;
  background: repeating-linear-gradient(#b5ae93 0 1px, transparent 1px 2px);
`;

const Menu = styled.nav`
  display: flex;
  align-items: center;
  gap: 8px;
  padding-left: 4px;
`;

const MenuItem = styled.button`
  display: flex;
  align-items: center;
  gap: 2px;
  padding: 0 ${({ $icon }) => ($icon ? 0 : 3)}px;
`;

const Tool = styled.button`
  display: flex;
  flex: none;
  align-items: center;
  justify-content: center;
  width: 23px;
  height: 20px;
`;

const DropTool = styled.button`
  display: flex;
  align-items: center;
  gap: 2px;
  height: 20px;
  padding: 0 3px;
`;

const TextTool = styled.button`
  display: flex;
  align-items: center;
  gap: 4px;
  height: 20px;
  padding: 0 5px 0 ${({ $tight }) => ($tight ? 0 : 4)}px;
  font-weight: ${({ $bold }) => ($bold ? 700 : 400)};
`;

const Memory = styled.button`
  width: 23px;
  color: #a3a199;
  font-weight: 700;
`;

const Sep = styled.span`
  flex: none;
  width: 1px;
  height: 16px;
  margin: 0 2px;
  background-color: #cfc7a8;
`;

const More = styled.button`
  display: flex;
  align-items: flex-end;
  justify-content: center;
  width: 13px;
  height: 18px;
  margin-right: 4px;
`;

const BigCaret = styled.span`
  border: 4px solid transparent;
  border-top-color: #222;
  border-bottom: none;
`;

const SearchBox = styled.div`
  display: flex;
  width: 150px;
  height: 18px;
  border: 1px solid #cdc8b0;
  border-radius: 3px;
  background-color: #fcfaf0;
`;

const SearchInput = styled.input`
  flex: 1;
  min-width: 0;
  border: none;
  background: none;
`;

const SearchDrop = styled.button`
  display: flex;
  align-items: center;
  justify-content: center;
  width: 15px;
  border-left: 1px solid #cdc8b0;
  background-color: #f6f1de;
  color: #999;
`;

const Window = styled.main`
  display: flex;
  flex: 1;
  flex-direction: column;
  border-top: 2px solid #8b8b78;
  border-left: 2px solid #8b8b78;
  border-right: 2px solid #f1ecd8;
`;

const WindowTitle = styled.div`
  display: flex;
  align-items: center;
  height: 19px;
  padding: 0 2px;
  border-bottom: 1px solid #a7a58f;
  background-color: #cacaca;
`;

const WindowName = styled.h2`
  flex: 1;
  margin: 0 4px;
  color: #2b2b2b;
  font-family: "Open Sans", "Liberation Sans", sans-serif;
  font-size: 12px;
  font-weight: 700;
`;

const ChildButton = styled.button`
  display: flex;
  align-items: center;
  justify-content: center;
  width: 20px;
  height: 16px;
`;

const CommandBar = styled.div`
  display: flex;
  align-items: center;
  height: 25px;
  border-bottom: 1px solid #b5b290;
  background: linear-gradient(#f4f3de, #f9efde);
`;

const Form = styled.form`
  display: flex;
  flex: 1;
  flex-direction: column;
  gap: 4px;
  padding: 4px 8px 8px;
  background-color: #fdfbe9;
`;

const Row = styled.div`
  display: flex;
  align-items: center;
  padding-right: ${({ $inset }) => ($inset ? 7 : 0)}px;
`;

const Columns = styled.div`
  display: grid;
  grid-template-columns: minmax(0, 650fr) minmax(0, 668fr);
  gap: 28px;
`;

const Stack = styled.div`
  display: flex;
  flex-direction: column;
  gap: 4px;
`;

const Label = styled.label`
  flex: none;
  width: ${({ $short }) => ($short ? 86 : 99)}px;
  white-space: nowrap;
`;

const From = styled.label`
  flex: none;
  width: ${({ $wide }) => ($wide ? 39 : 32)}px;
  padding-left: 12px;
`;

const Field = styled.div`
  display: flex;
  flex: ${({ $width }) => ($width ? `0 0 ${$width}px` : 1)};
  min-width: 0;
  height: 18px;
  overflow: hidden;
  border: 1px solid #a9a888;
  border-radius: 3px;
  background-color: ${({ $tinted }) => ($tinted ? "#fdfbe9" : "#fff")};
`;

const Input = styled.input`
  flex: 1;
  min-width: 0;
  padding: 0 ${({ $selected }) => ($selected ? 1 : 2)}px;
  border: ${({ $selected }) => ($selected ? "1px solid #fff" : "none")};
  outline: none;
  background-color: ${({ $selected }) => ($selected ? "#5468c6" : "transparent")};
  color: ${({ $selected }) => ($selected ? "#fff" : "#000")};
  text-align: ${({ $right }) => ($right ? "right" : "left")};
`;

const FieldButton = styled.button`
  display: flex;
  align-items: center;
  justify-content: center;
  width: 15px;
  background: linear-gradient(#fcfaea, #f1ebcb);
  color: #5a4a10;
  font-weight: 700;

  &:first-of-type {
    border-left: 1px solid #cfcbaa;
  }
`;

const Group = styled.fieldset`
  display: flex;
  flex-direction: column;
  gap: 4px;
  min-width: 0;
  margin: -2px 0 1px;
  padding: 4px 11px 6px 9px;
  border: 1px solid #b3b090;
  border-radius: 4px;
`;

const Legend = styled.legend`
  padding: 0 2px 0 0;
  color: #8a5d00;
  font-weight: 700;
  line-height: 12px;
`;

const MakeButton = styled.button`
  display: flex;
  align-items: center;
  justify-content: space-between;
  width: 160px;
  height: 18px;
  margin-left: 6px;
  padding: 0 5px 0 2px;
  border: 1px solid #b3b090;
  border-radius: 3px;
  background: linear-gradient(#fdfbec, #f3edd0);
`;

const TableBar = styled.div`
  display: flex;
  align-items: center;
  height: 23px;
  margin-bottom: -4px;
  padding-left: 1px;
`;

const TableFrame = styled.div`
  flex: 1;
  margin-bottom: 1px;
  border: 1px solid #a9a888;
  padding-bottom: 5px;
  background-color: #fff;
`;

const Table = styled.table`
  width: 100%;
  border-spacing: 0;
  table-layout: fixed;
`;

const HeadLine = styled.tr`
  height: 21px;
`;

const Line = styled.tr`
  height: 19px;

  tbody:nth-of-type(odd) & {
    background-color: #f8fafa;
  }
`;

const Th = styled.th`
  overflow: hidden;
  padding: 3px 0 2px 4px;
  border-right: 1px solid #c5c0a2;
  border-bottom: 1px solid #c5c0a2;
  background: linear-gradient(#fcfaea, #f2ebcd);
  color: #4f420c;
  font-weight: 400;
  text-align: left;
  vertical-align: top;
  white-space: nowrap;
`;

const Td = styled.td`
  overflow: hidden;
  padding: 3px ${({ $right, $center }) => ($right || $center ? 4 : 0)}px 1px 4px;
  border-right: 1px solid ${({ $soft }) => ($soft ? "#eceeee" : "#c9cccc")};
  border-bottom: 1px solid ${({ $end }) => ($end ? "#c9cccc" : "#eceeee")};
  color: #000;
  text-align: ${({ $right, $center }) => ($right ? "right" : $center ? "center" : "left")};
  vertical-align: top;
  white-space: nowrap;
`;

const FormActions = styled.div`
  display: flex;
  align-items: center;
  justify-content: flex-end;
  height: 25px;
  padding-right: 1px;
  border-top: 1px solid #b5b290;
`;

const WindowTabs = styled.div`
  display: flex;
  gap: 2px;
  height: 25px;
  padding: 3px 1px 2px;
  border-top: 1px solid #e6dfc8;
`;

const WindowTab = styled.button`
  display: flex;
  align-items: center;
  gap: 2px;
  width: 171px;
  padding: 0 1px;
  background-color: ${({ $active }) => ($active ? "#a9c3e0" : "#b4b1ad")};
  color: #2e2e2e;
`;

const StatusBar = styled.footer`
  display: flex;
  gap: 4px;
  height: 20px;
  padding-bottom: 1px;
  line-height: 18px;
`;

const Hint = styled.span`
  flex: 1;
  padding: 0 4px;
  border: 1px solid #ddd6bd;
`;

const Lock = styled.span`
  width: 31px;
  border: 1px solid #ddd6bd;
  color: ${({ $off }) => ($off ? "#a8a28c" : "#3c3410")};
  text-align: center;
`;

const Taskbar = styled.div`
  display: flex;
  align-items: stretch;
  height: 30px;
  background: linear-gradient(#3f84f0, #2560dc 4px, #2257d4 24px, #1a44a8);
  color: #fff;
`;

const Start = styled.button`
  display: flex;
  align-items: center;
  gap: 4px;
  width: 98px;
  padding-left: 10px;
  border-radius: 0 12px 12px 0;
  background: linear-gradient(#6cba62, #3a963a 5px, #37903a 22px, #256d28);
  box-shadow: inset -3px 0 4px #236324;
  font-size: 17px;
  font-style: italic;
  font-weight: 700;
  text-shadow: 1px 1px 1px #1c4a1c;
`;

const Tasks = styled.div`
  display: flex;
  flex: 1;
  gap: 2px;
  padding: 3px 0 2px 7px;
`;

const Task = styled.button`
  display: flex;
  align-items: center;
  gap: 4px;
  flex: 0 1 158px;
  padding: 0 10px;
  border-radius: 2px;
  background: ${({ $active }) =>
    $active ? "#1d4db4" : "linear-gradient(#5c9bfa, #3b7df2 4px, #3a7bee)"};
  box-shadow: ${({ $active }) => ($active ? "inset 1px 1px 2px #12327c" : "none")};
`;

const Lang = styled.span`
  width: 35px;
  line-height: 30px;
`;

const Tray = styled.div`
  display: flex;
  align-items: center;
  gap: 2px;
  min-width: 220px;
  background: linear-gradient(#2fb2f5, #129be8 4px, #1092e2 24px, #0c73c4);
  box-shadow: inset 1px 0 #0e5fb8;
`;

const Clock = styled.time`
  margin-left: 4px;
`;

export default App;
